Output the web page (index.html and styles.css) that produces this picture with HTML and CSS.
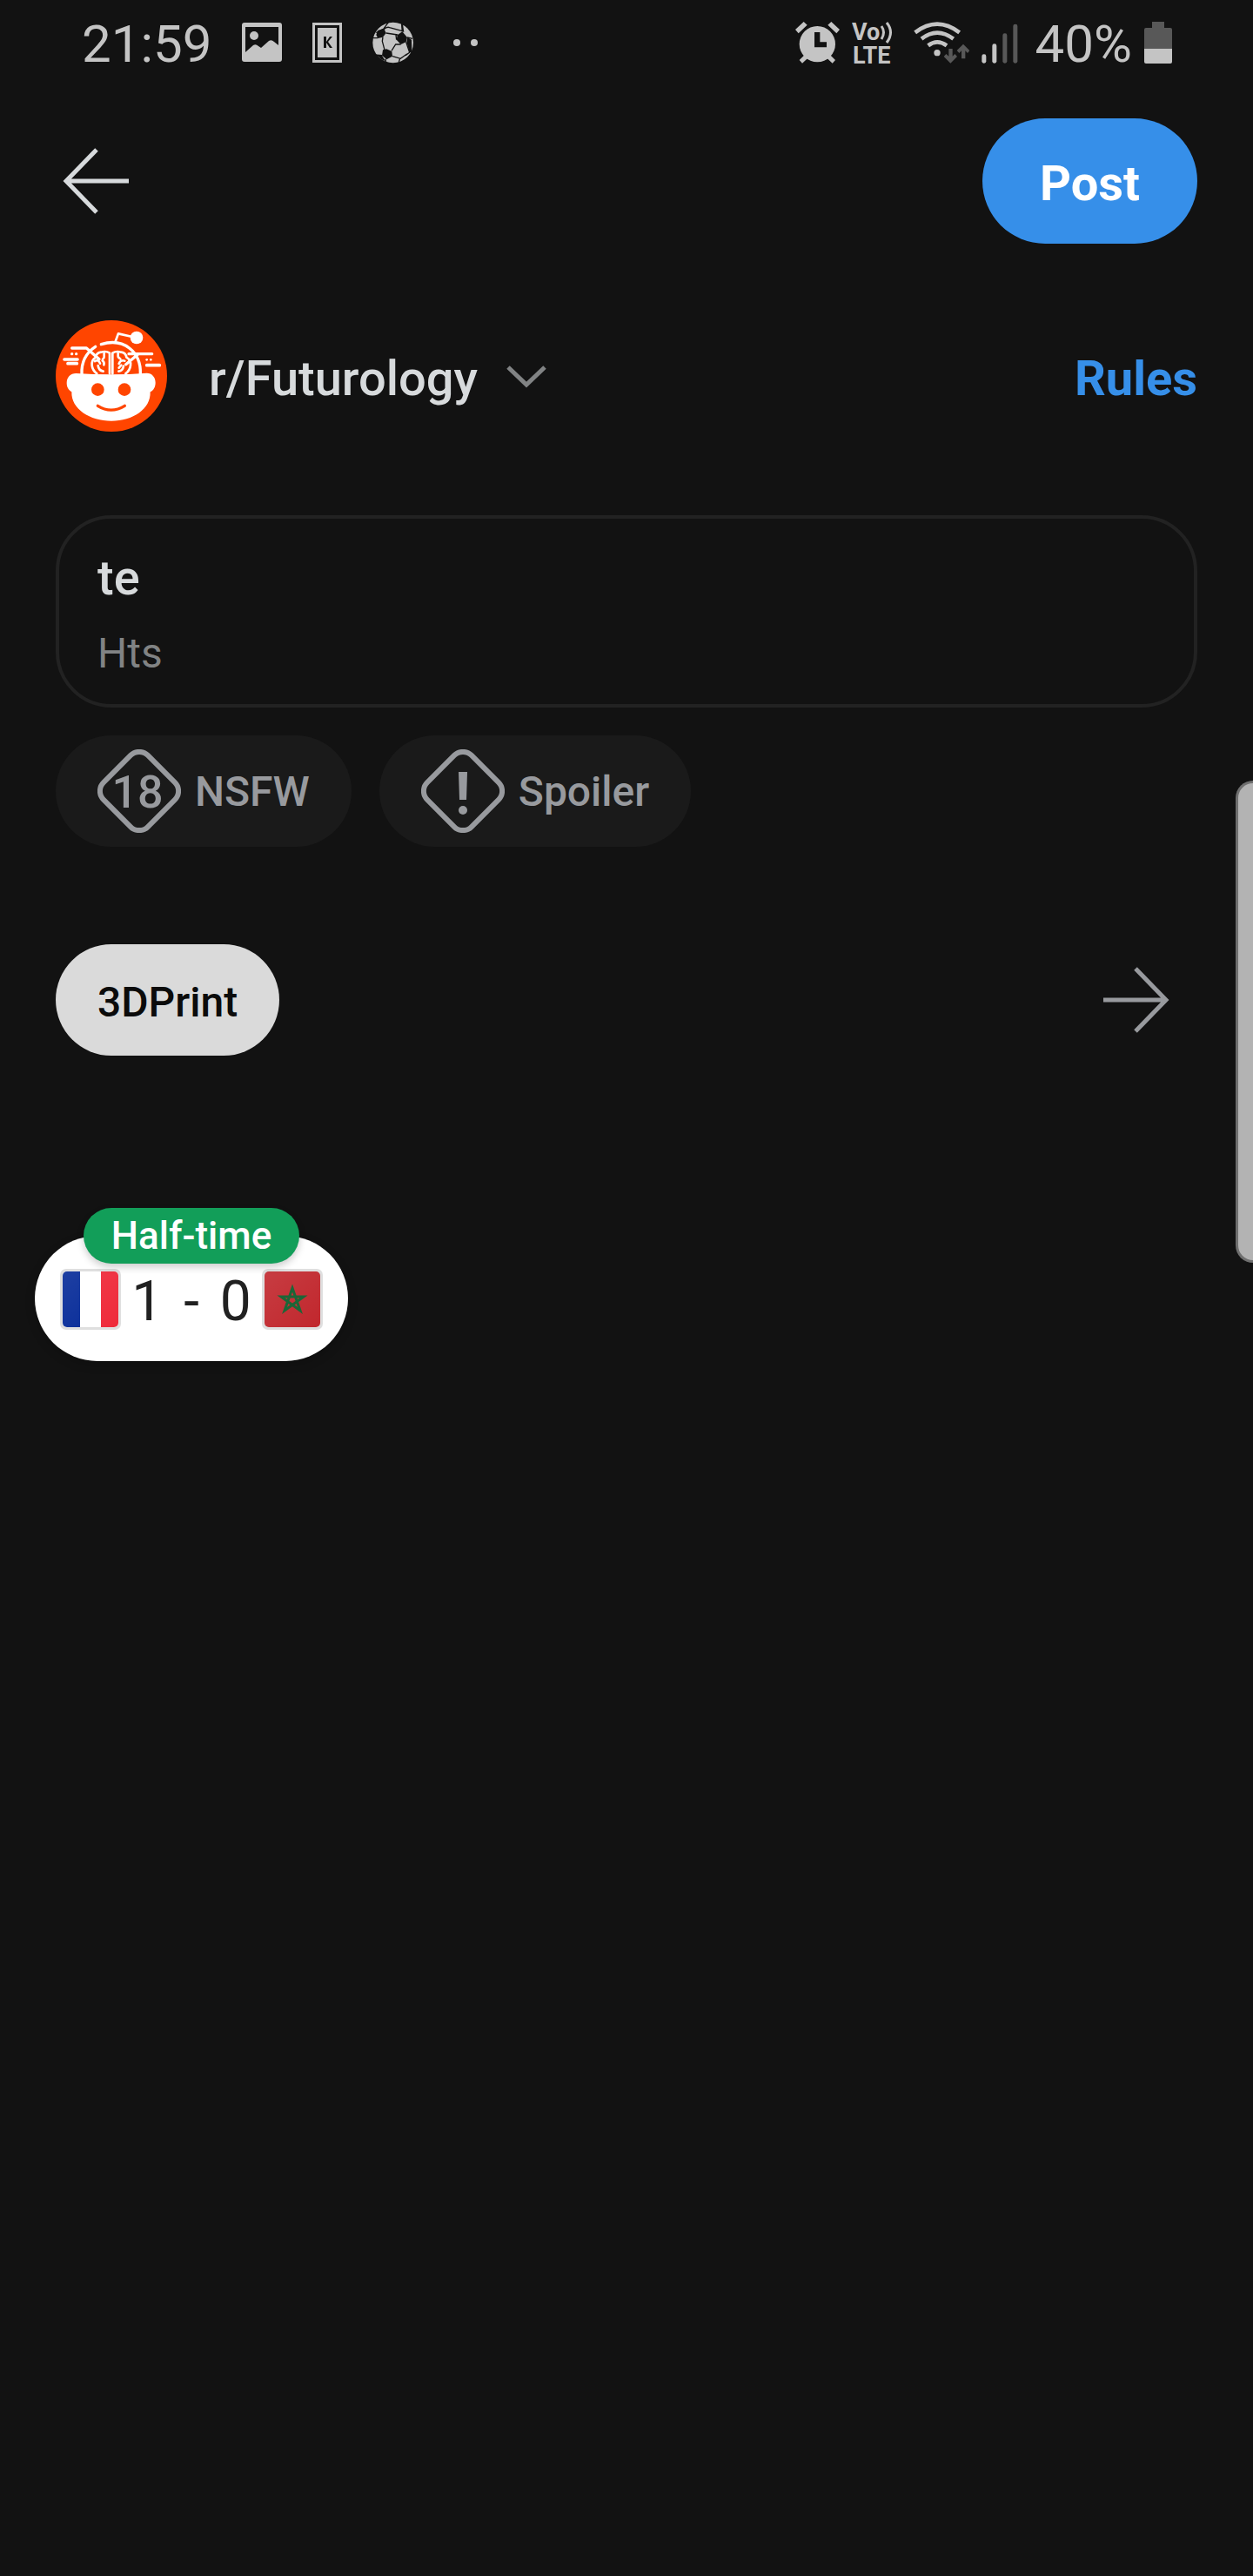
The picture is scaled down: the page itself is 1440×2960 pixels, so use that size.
FILE: index.html
```html
<!DOCTYPE html>
<html lang="en">
<head>
<meta charset="utf-8">
<meta name="viewport" content="width=device-width, initial-scale=1">
<title>Create post</title>
<link rel="stylesheet" href="styles.css">
</head>
<body>
<div class="status">
  <div class="status-group status-left">
    <span class="status-text">21:59</span>
    <svg class="s-photo" viewBox="0 0 48 48" aria-hidden="true"><path fill-rule="evenodd" d="M4 1h40a3 3 0 0 1 3 3v39a3 3 0 0 1-3 3H4a3 3 0 0 1-3-3V4a3 3 0 0 1 3-3zM5 6v29l9-8q3-2 6 1l3 2 9-8q3-2 6 1l5 4V6z"/><circle cx="15" cy="16" r="5"/></svg>
    <svg class="s-card" viewBox="0 0 34 46" aria-hidden="true"><path fill-rule="evenodd" d="M0 0h34v46H0zM3 3v40h28V3z"/><path d="M6 6h22v34H6z"/><path class="ink" d="M13 16h3v13h-3zM16 22l4-6h3l-5 6 5 7h-3l-4-6z"/></svg>
    <svg class="s-ball" viewBox="20 20 144 144" aria-hidden="true"><circle cx="94" cy="92" r="70"/><g class="ink"><path d="M42 50l21-7 7 16-11 14-17 4-6-12z"/><path d="M109 66l17-12 17 20-4 16-18 8-15-16z"/><path d="M59 117l13-3 18 8 2 17-20 11-16-14z"/><path d="M122 26l4 28 6 2-4-28zM158 82l-14-8-3 16 10 36 8-2z"/><path d="M28 122l8 12 20 2 12 20-14-6-18-16z"/></g><path class="seam" d="M36 58l26-14L78 22M70 59l40 6M62 46q12-10 20-6l44 12M126 54l-2-30M143 74l18 4M139 90l12 36-14 10M121 98l-18 0-14 22M106 82l-2-16M59 73l-2 14 8 30M24 76l18 0M56 136l-26-2M92 139l28 8 22-16M68 148l2 14M118 146l-4 14"/></svg>
    <svg class="s-dots" viewBox="0 0 28 8" aria-hidden="true"><circle cx="4" cy="4" r="4"/><circle cx="24" cy="4" r="4"/></svg>
  </div>
  <div class="status-group status-right">
    <svg class="s-alarm" viewBox="102 75 153 144" aria-hidden="true"><circle cx="178" cy="152" r="62"/><path d="M102 102l29-27 12 11-30 29zM255 102l-29-27-12 11 30 29zM116 207l22-22 12 11-24 22zM240 207l-22-22-12 11 24 22z"/><path class="ink" d="M168 111h19v34h23v18h-42z"/></svg>
    <svg class="s-lte" viewBox="0 -8 48 64" aria-hidden="true"><text x="0" y="21" font-size="27">Vo</text><text x="1" y="48" font-size="27">LTE</text><path class="line" d="M34 5q5 7 0 15M40 1q9 11 0 23" stroke-width="3"/></svg>
    <svg class="s-wifi" viewBox="513 75 192 144" aria-hidden="true"><path class="line" stroke-width="14" d="M518 112q76-58 153 0M540 134q54-42 110 0M563 157q31-24 64 0"/><circle cx="594" cy="182" r="11"/><path class="dim" d="M634 168h13v26l8-8 8 9-23 23-23-23 8-9 9 8zM678 202h13v-27l8 8 7-9-22-22-22 22 8 9 8-8z"/></svg>
    <svg class="s-signal" viewBox="743 75 126 144" aria-hidden="true"><rect x="744" y="187" width="15" height="31" rx="7"/><rect x="780" y="151" width="15" height="67" rx="7"/><g class="dim"><rect x="816" y="115" width="15" height="103" rx="7"/><rect x="852" y="83" width="15" height="135" rx="7"/></g></svg>
    <span class="status-text">40%</span>
    <svg class="s-battery" viewBox="0 0 32 48" aria-hidden="true"><path class="dim" d="M9 0h14v7h7q2 0 2 2v22H0V9q0-2 2-2h7z"/><path d="M0 31h32v15q0 2-2 2H2q-2 0-2-2z"/></svg>
  </div>
</div>

<header class="topbar">
  <button class="icon-button" type="button" aria-label="Back"><svg viewBox="0 0 96 96"><path d="M84 48H12M47 12L12 48l35 36"/></svg></button>
  <button class="post" type="submit" form="post-form">Post</button>
</header>

<main>
  <div class="community">
    <svg class="avatar" viewBox="42 39 384 384" aria-hidden="true">
      <circle cx="234" cy="231" r="192" fill="#ff4500"/>
      <path fill="#fff" d="M112 222q60 4 122 4t122-5c18 0 30 14 30 33 0 15-7 27-18 32 2 60-60 100-134 100S95 346 97 286c-10-6-17-16-17-31 0-19 13-33 32-33z"/>
      <g fill="none" stroke="#fff" stroke-width="10" stroke-linecap="round" stroke-linejoin="round">
        <path d="M132 225c-2-42 12-72 47-95M199 122c78-24 138 26 135 103"/>
        <path stroke-width="8" d="M247 115l11-30 48 11"/>
        <path d="M98 135h50l44 38M326 155h48l-80 0M326 156l-42 35"/>
        <path d="M72 174h45M84 188h31M356 194h44" stroke-width="11"/>
        <path d="M228 223v-71q-12-8-30-3-16 2-18 18-15 9-13 28 2 17 17 28M238 223v-71q12-8 30-3 16 2 18 18 17 10 14 28-2 17-17 28" stroke-width="8"/>
        <path d="M209 153v12q0 6-5 8M177 180q13-7 18 8M188 195q2 17 18 20M203 178q8 5 5 15M257 153v10q0 5 8 9M280 179q-15-5-20 10M276 197q-3 16-17 18M260 203l8-9" stroke-width="8"/>
      </g>
      <g fill="#fff"><circle cx="321" cy="99" r="22"/><circle cx="98" cy="155" r="5"/><circle cx="113" cy="155" r="5"/><circle cx="356" cy="175" r="4"/><circle cx="370" cy="175" r="4"/></g>
      <g fill="#ff4500"><circle cx="187" cy="278" r="22"/><circle cx="279" cy="278" r="22"/></g>
      <path d="M187 334q46 29 93 0" fill="none" stroke="#ff4500" stroke-width="10" stroke-linecap="round"/>
    </svg>
    <button class="community-name" type="button">r/Futurology<svg viewBox="0 0 64 64" aria-hidden="true"><path d="M11 22l21 20 21-20"/></svg></button>
    <a class="rules" href="#rules">Rules</a>
  </div>

  <form id="post-form">
    <div class="field">
      <input class="title" type="text" aria-label="Title" value="te">
      <input class="body" type="text" aria-label="Body text" value="Hts">
    </div>
    <div class="tags">
      <button class="chip" type="button"><svg viewBox="0 0 96 96" aria-hidden="true"><rect x="12" y="12" width="72" height="72" rx="14" transform="rotate(45 48 48)"/><text x="46" y="67" text-anchor="middle">18</text></svg>NSFW</button>
      <button class="chip" type="button"><svg viewBox="0 0 96 96" aria-hidden="true"><rect x="12" y="12" width="72" height="72" rx="14" transform="rotate(45 48 48)"/><path class="solid" d="M43 26h10l-1 32h-8z"/><circle class="solid" cx="48" cy="70" r="5"/></svg>Spoiler</button>
    </div>
    <div class="flair-row">
      <button class="flair" type="button">3DPrint</button>
      <button class="icon-button muted" type="button" aria-label="More flair"><svg viewBox="0 0 96 96"><path d="M12 48h72M49 12l35 36-35 36"/></svg></button>
    </div>
  </form>
</main>

<div class="edge-handle"></div>

<aside class="match" aria-label="Live score">
  <span class="match-state">Half-time</span>
  <svg viewBox="0 0 70 70" role="img" aria-label="France"><defs><clipPath id="flag"><rect x="3" y="3" width="64" height="64" rx="5"/></clipPath><linearGradient id="shade" x1="0" y1="0" x2="1" y2="1"><stop offset="0" stop-color="#fff" stop-opacity=".1"/><stop offset="1" stop-color="#fff" stop-opacity="0"/></linearGradient></defs><rect width="70" height="70" rx="7" fill="#dfdfdf"/><g clip-path="url(#flag)"><rect x="3" y="3" width="64" height="64" fill="#fff"/><rect x="3" y="3" width="20" height="64" fill="#052a98"/><rect x="47" y="3" width="20" height="64" fill="#ef2a3a"/><rect x="3" y="3" width="64" height="64" fill="url(#shade)"/></g></svg>
  <span class="score"><span>1</span><span>-</span><span>0</span></span>
  <svg viewBox="0 0 70 70" role="img" aria-label="Morocco"><rect width="70" height="70" rx="7" fill="#dfdfdf"/><g clip-path="url(#flag)"><rect x="3" y="3" width="64" height="64" fill="#c1272d"/><rect x="3" y="3" width="64" height="64" fill="url(#shade)"/></g><path d="M35 22l9 26-22-16h26L26 48z" fill="none" stroke="#1c6637" stroke-width="3"/></svg>
</aside>
</body>
</html>
```
FILE: styles.css
```css
* { box-sizing: border-box; }

body {
  margin: 0;
  min-height: 100vh;
  position: relative;
  background: #121212;
  color: #d7dadc;
  font-family: Roboto, "Liberation Sans", sans-serif;
}

button {
  border: 0;
  padding: 0;
  background: none;
  color: inherit;
  font: inherit;
}

svg { display: block; flex: none; }

/* Status bar */
.status {
  height: 96px;
  padding: 2px 93px 0 94px;
  display: flex;
  align-items: center;
  justify-content: space-between;
  color: #c4c4c4;
}
.status-group { display: flex; align-items: center; }
.status-text { padding-top: 4px; font-size: 60px; line-height: 72px; }
.status svg { fill: #c4c4c4; }
.status .ink { fill: #121212; }
.status .dim { fill: #585858; }
.status .line { fill: none; stroke: #c4c4c4; }
.status .seam { fill: none; stroke: #121212; stroke-width: 4; }
.status text { font-weight: 700; }
.status-left { gap: 34px; }
.s-photo { width: 48px; height: 48px; }
.s-card { width: 34px; height: 46px; }
.s-ball { width: 48px; height: 48px; }
.s-dots { width: 28px; height: 8px; margin-left: 12px; }
.status-right { gap: 14px; }
.s-alarm { width: 51px; height: 48px; }
.s-lte { width: 48px; height: 64px; }
.s-wifi { width: 64px; height: 48px; margin-left: 9px; }
.s-signal { width: 42px; height: 48px; margin-right: 6px; }
.s-battery { width: 32px; height: 48px; }

/* Top bar */
.topbar {
  padding: 40px 64px 88px;
  display: flex;
  align-items: center;
  justify-content: space-between;
}
.icon-button svg {
  width: 96px;
  height: 96px;
  fill: none;
  stroke: #d7dadc;
  stroke-width: 5;
}
.icon-button.muted svg { stroke: #989a9e; }
.post {
  height: 144px;
  padding: 5px 66px 0;
  border-radius: 72px;
  background: #368fe9;
  color: #fff;
  font-size: 56px;
  font-weight: 700;
}

main { padding: 0 64px; }

/* Community */
.community { display: flex; align-items: center; }
.avatar { width: 128px; height: 128px; margin-right: 48px; }
.community-name {
  display: flex;
  align-items: center;
  gap: 24px;
  padding-top: 5px;
  font-size: 56px;
  font-weight: 500;
}
.community-name svg {
  width: 64px;
  height: 64px;
  margin-bottom: 5px;
  fill: none;
  stroke: #818384;
  stroke-width: 5;
}
.rules {
  margin-left: auto;
  padding-top: 5px;
  color: #368fe9;
  font-size: 56px;
  font-weight: 700;
  text-decoration: none;
}

/* Post fields */
.field {
  margin-top: 96px;
  padding: 32px 44px 27px;
  display: flex;
  flex-direction: column;
  gap: 18px;
  border: 4px solid #222;
  border-radius: 64px;
}
.field input {
  width: 100%;
  padding: 0;
  border: 0;
  outline: 0;
  background: none;
  font-family: inherit;
}
.field .title { height: 72px; color: #d7dadc; font-size: 56px; font-weight: 500; }
.field .body { height: 64px; color: #818384; font-size: 48px; }

/* Tags */
.tags { margin-top: 32px; display: flex; gap: 32px; }
.chip {
  height: 128px;
  padding: 0 48px;
  display: flex;
  align-items: center;
  gap: 16px;
  border-radius: 64px;
  background: #1a1a1a;
  color: #989a9e;
  font-size: 48px;
  font-weight: 500;
}
.chip svg {
  width: 96px;
  height: 96px;
  fill: none;
  stroke: #989a9e;
  stroke-width: 6;
}
.chip text { fill: #989a9e; stroke: none; font-size: 52px; }
.chip .solid { fill: #989a9e; stroke: none; }

/* Flair */
.flair-row {
  margin-top: 112px;
  padding-right: 24px;
  display: flex;
  align-items: center;
  justify-content: space-between;
}
.flair {
  height: 128px;
  padding: 4px 48px 0;
  border-radius: 64px;
  background: #dadada;
  color: #0b0b0b;
  font-size: 48px;
  font-weight: 500;
}

/* Overlays */
.edge-handle {
  position: absolute;
  top: 897px;
  right: 0;
  width: 20px;
  height: 554px;
  border: 3px solid #6f6f6f;
  border-right: 0;
  border-radius: 20px 0 0 20px;
  background: #b3b3b3;
}
.match {
  position: absolute;
  top: 1420px;
  left: 40px;
  width: 360px;
  height: 144px;
  padding: 0 29px 2px;
  display: flex;
  align-items: center;
  justify-content: space-between;
  border-radius: 72px;
  background: #fff;
  box-shadow: 0 4px 12px rgba(0, 0, 0, .2);
}
.match svg { width: 70px; height: 70px; margin-top: 4px; }
.match-state {
  position: absolute;
  top: -32px;
  left: 56px;
  right: 56px;
  border-radius: 32px;
  background: #129e59;
  box-shadow: 0 4px 8px rgba(0, 0, 0, .2);
  color: #fff;
  font-size: 44px;
  font-weight: 500;
  line-height: 64px;
  text-align: center;
}
.score {
  display: flex;
  gap: 24px;
  padding-top: 8px;
  color: #212121;
  font-size: 64px;
}
```
